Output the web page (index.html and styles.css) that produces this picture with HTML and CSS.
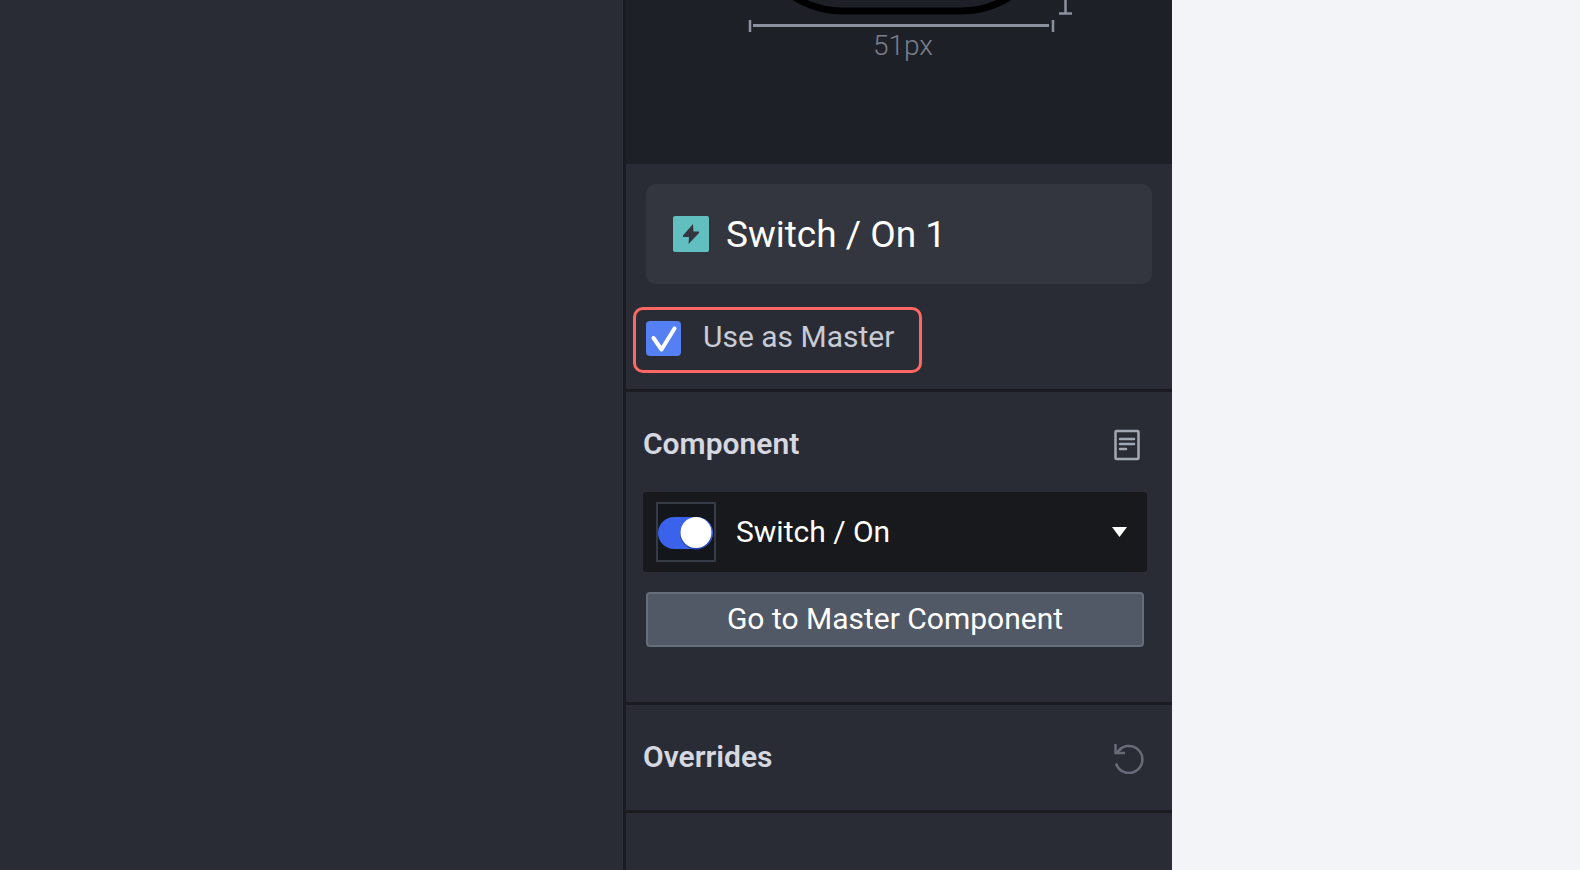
FILE: index.html
```html
<!DOCTYPE html>
<html lang="en">
<head>
    <meta charset="UTF-8">
    <title>Switch / On 1</title>
    <link rel="stylesheet" href="styles.css">
</head>
<body>

    <div class="app">
        <div class="canvas"></div>

        <div class="panel">
            <div class="preview">
                <svg class="shape" width="350" height="34" viewBox="0 0 350 34" fill="none">
                    <rect x="28" y="-166" width="296" height="177" rx="88" stroke="#000" stroke-width="7"/>
                    <path d="M27 25.500H323" stroke="#8b919f" stroke-width="3"/>
                    <path d="M24 20V32M327 20V32M339.500 0V13" stroke="#8b919f" stroke-width="2.500"/>
                    <path d="M333 13.500H346" stroke="#8b919f" stroke-width="2.500"/>
                </svg>
                <div class="size">51px</div>
            </div>

            <div class="section layer">
                <div class="name">
                    <svg width="36" height="36" viewBox="0 0 36 36">
                        <rect width="36" height="36" rx="2" fill="#62bfbf"/>
                        <path d="M20 8L10 19.500C9.500 20.500 10 21 11 21H16L15.500 28L26 17C26.500 16 26 15.500 25 15.500H20.500Z" fill="#34363f"/>
                    </svg>
                    <input type="text" class="name-input" value="Switch / On 1" aria-label="Layer name">
                </div>
                <div class="master">
                    <input type="checkbox" class="check" id="master" checked>
                    <svg class="tick" width="36" height="36" viewBox="0 0 36 36" fill="none">
                        <path d="M7.500 17L15.500 28.500L28.500 7.500" stroke="#fff" stroke-width="4" stroke-linecap="round" stroke-linejoin="round"/>
                    </svg>
                    <label for="master">Use as Master</label>
                </div>
            </div>

            <div class="section component">
                <div class="heading">
                    <h2>Component</h2>
                    <button class="icon" aria-label="Description">
                        <svg width="32" height="32" viewBox="0 0 32 32" fill="none" stroke="#a1a7b3">
                            <rect x="2.500" y="2" width="23" height="28" rx="1" stroke-width="2.500"/>
                            <path d="M7 10H21M7 15H21M7 20H13" stroke-width="2.500" stroke-linecap="round"/>
                        </svg>
                    </button>
                </div>
                <div class="picker">
                    <div class="thumb">
                        <svg width="56" height="56" viewBox="0 0 56 56">
                            <rect x="0" y="13" width="55" height="32" rx="16" fill="#3a62ea"/>
                            <circle cx="38" cy="29.500" r="16" fill="#2746b5"/>
                            <circle cx="38" cy="28.500" r="15.500" fill="#fff"/>
                        </svg>
                    </div>
                    <select class="picker-select" aria-label="Component">
                        <option>Switch / On</option>
                    </select>
                    <svg class="arrow" width="16" height="10" viewBox="0 0 16 10">
                        <path d="M0 0H15L7.500 10Z" fill="#fff"/>
                    </svg>
                </div>
                <button class="go">Go to Master Component</button>
            </div>

            <div class="section overrides">
                <div class="heading">
                    <h2>Overrides</h2>
                    <button class="icon" aria-label="Reset overrides">
                        <svg width="32" height="32" viewBox="0 0 32 32" fill="none" stroke="#686b77" stroke-width="2.500">
                            <path d="M3 21.500A13.500 13.500 0 1 0 4 11"/>
                            <path d="M2.500 2V11H12"/>
                            <path d="M3 11L9 6"/>
                        </svg>
                    </button>
                </div>
            </div>
        </div>

        <div class="page"></div>
    </div>

</body>
</html>
```

FILE: styles.css
```css
* {
    box-sizing: border-box;
}

body {
    margin: 0;
    font-family: Roboto, "Liberation Sans", sans-serif;
    color: #d5d8e1;
    background-color: #f2f4f8;
}

.app {
    display: flex;
    min-height: 100vh;
}

.canvas {
    flex: 623;
    background-color: #2a2c35;
}

.panel {
    width: 549px;
    border-left: 3px solid #1b1c21;
    background-color: #2a2c35;
}

.page {
    flex: 408;
}

.preview {
    height: 164px;
    padding: 0 16px 0 20px;
    text-align: center;
    background-color: #1e2027;
}

.shape {
    display: block;
    margin: 0 auto;
}

.size {
    padding-left: 4px;
    font-size: 28px;
    font-weight: 300;
    line-height: 24px;
    color: #7b7f8c;
}

.section {
    border-bottom: 3px solid #1b1c21;
}

.layer {
    padding: 20px 20px 16px 7px;
}

.name {
    display: flex;
    align-items: center;
    gap: 17px;
    height: 100px;
    margin-left: 13px;
    padding: 0 27px;
    border-radius: 10px;
    background-color: #34363f;
}

.name-input {
    flex: 1;
    min-width: 0;
    padding: 0;
    border: 0;
    outline: 0;
    background: none;
    color: #fff;
    font-family: inherit;
    font-size: 37px;
}

.master {
    display: inline-flex;
    position: relative;
    align-items: flex-start;
    gap: 22px;
    height: 66px;
    margin-top: 23px;
    padding: 11px 25px 0 10px;
    border: 3px solid #ff6862;
    border-radius: 10px;
    font-size: 30px;
    line-height: 32px;
    vertical-align: top;
    color: #c8cbd5;
}

.check {
    appearance: none;
    width: 35px;
    height: 35px;
    margin: 0;
    border-radius: 4px;
    background-color: #5580f3;
}

.tick {
    display: none;
    position: absolute;
    left: 10px;
    top: 11px;
    pointer-events: none;
}

.check:checked + .tick {
    display: block;
}

.component {
    height: 313px;
    padding: 36px 27px 0 17px;
}

.overrides {
    height: 108px;
    padding: 36px 27px 0 17px;
}

.heading {
    display: flex;
    justify-content: space-between;
    align-items: center;
    height: 34px;
}

h2 {
    margin: 0;
    padding-bottom: 3px;
    font-size: 30px;
    font-weight: 600;
}

.icon {
    display: flex;
    padding: 0;
    border: 0;
    background: none;
}

.picker {
    display: flex;
    align-items: center;
    gap: 20px;
    height: 80px;
    margin: 30px -2px 0 0;
    padding: 0 19px 0 13px;
    border-radius: 4px;
    background-color: #18191c;
}

.thumb {
    width: 60px;
    height: 60px;
    border: 2px solid #363b48;
    background-color: #13161b;
}

.picker-select {
    appearance: none;
    flex: 1;
    min-width: 0;
    padding: 0 0 2px;
    border: 0;
    background: none;
    color: #fff;
    font-family: inherit;
    font-size: 30px;
}

.go {
    display: block;
    width: calc(100% - 4px);
    height: 55px;
    margin: 20px 3px 0;
    padding: 0 0 2px;
    border: 2px solid #656f7b;
    border-radius: 4px;
    background-color: #525966;
    color: #fff;
    font-family: inherit;
    font-size: 30px;
}
```
